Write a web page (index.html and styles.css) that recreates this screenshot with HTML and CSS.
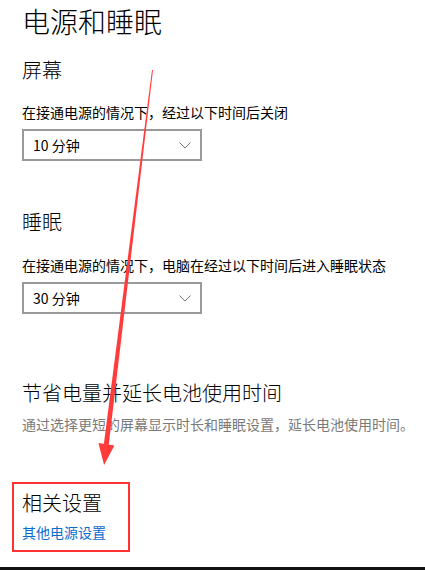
FILE: index.html
```html
<!DOCTYPE html>
<html lang="zh-CN">
<head>
    <meta charset="UTF-8">
    <meta name="viewport" content="width=device-width, initial-scale=1.0">
    <title>电源和睡眠</title>
    <link rel="stylesheet" href="styles.css">
</head>
<body>
    <div class="page">
        <h1 class="page-title">电源和睡眠</h1>

        <h2 class="group-title screen-title">屏幕</h2>
        <p class="label">在接通电源的情况下，经过以下时间后关闭</p>
        <div class="select">
            <span>10 分钟</span>
            <svg class="chevron" width="12" height="7" viewBox="0 0 12 7"><path d="M0.5 0.5 L6 6 L11.5 0.5" fill="none" stroke="#767676" stroke-width="1"/></svg>
        </div>

        <h2 class="group-title sleep-title">睡眠</h2>
        <p class="label">在接通电源的情况下，电脑在经过以下时间后进入睡眠状态</p>
        <div class="select">
            <span>30 分钟</span>
            <svg class="chevron" width="12" height="7" viewBox="0 0 12 7"><path d="M0.5 0.5 L6 6 L11.5 0.5" fill="none" stroke="#767676" stroke-width="1"/></svg>
        </div>

        <h2 class="group-title battery-title">节省电量并延长电池使用时间</h2>
        <p class="hint">通过选择更短的屏幕显示时长和睡眠设置，延长电池使用时间。</p>

        <div class="related">
            <h2 class="group-title">相关设置</h2>
            <a class="link" href="#">其他电源设置</a>
        </div>
    </div>
    <div class="bottom-bar"></div>

    <!-- annotation arrow drawn over the page -->
    <svg class="arrow" width="425" height="570" viewBox="0 0 425 570">
        <polygon points="152,70 153,70 108.6,446 103.6,446" fill="#ff3b3b"/>
        <polygon points="98.4,443 114.4,445.5 104.1,465" fill="#ff3b3b"/>
    </svg>
</body>
</html>
```

FILE: styles.css
```css
body {
    margin: 0;
    background: #fff;
    font-family: "Noto Sans CJK SC", "Noto Sans", sans-serif;
    color: #000;
    overflow: hidden;
    position: relative;
}

.page {
    padding: 3px 0 0 22px;
}

.page-title {
    margin: 0;
    font-size: 28px;
    line-height: 36px;
    font-weight: 300;
}

.group-title {
    margin: 0;
    font-size: 20px;
    line-height: 28px;
    font-weight: 300;
}

.screen-title {
    margin-top: 17px;
}

.sleep-title {
    margin-top: 47px;
}

.battery-title {
    margin-top: 65px;
}

.label {
    margin: 18px 0 0;
    font-size: 14px;
    line-height: 20px;
}

.sleep-title + .label {
    margin-top: 19px;
}

.select {
    box-sizing: border-box;
    width: 180px;
    height: 32px;
    margin-top: 7px;
    padding: 0 9px 0 9px;
    border: 2px solid #999;
    display: flex;
    align-items: center;
    justify-content: space-between;
    font-size: 14px;
}

.chevron {
    display: block;
}

.hint {
    margin: 7px 0 0;
    font-size: 14px;
    line-height: 20px;
    color: #7a7a7a;
}

.related {
    display: inline-block;
    margin: 48px 0 0 -10px;
    padding: 5px 22px 8px 8px;
    border: 2px solid #ff3333;
}

.link {
    display: block;
    margin-top: 5px;
    font-size: 14px;
    line-height: 20px;
    color: #0a6ccf;
    text-decoration: none;
}

.bottom-bar {
    height: 4px;
    margin-top: 15px;
    background: #111;
}

.arrow {
    position: absolute;
    top: 0;
    left: 0;
    pointer-events: none;
}
```
